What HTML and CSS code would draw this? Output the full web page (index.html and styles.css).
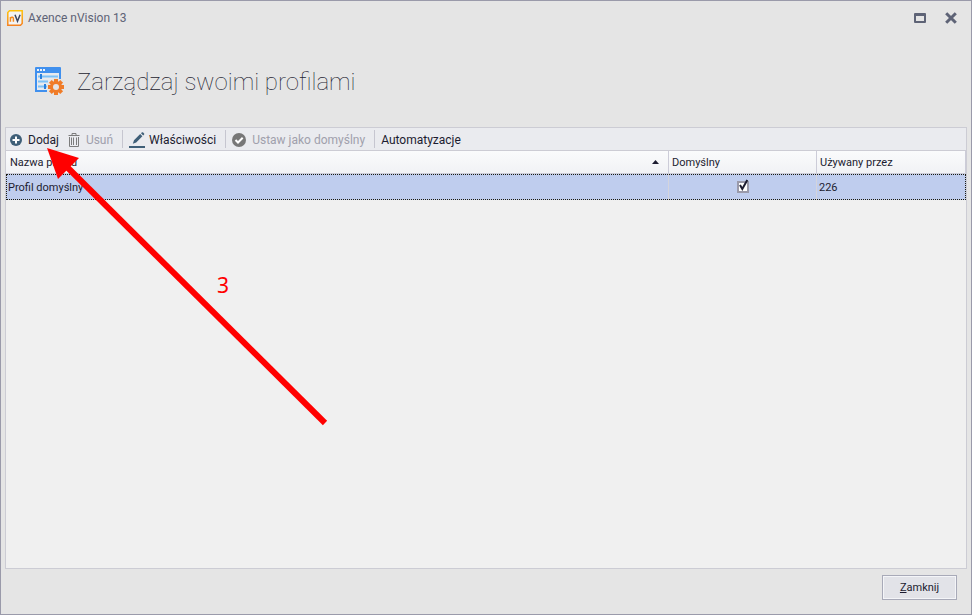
FILE: index.html
```html
<!DOCTYPE html>
<html lang="pl">
<head>
    <meta charset="UTF-8">
    <meta name="viewport" content="width=device-width, initial-scale=1.0">
    <title>Axence nVision 13</title>
    <link rel="stylesheet" href="styles.css">
</head>
<body>

    <div class="window">
        <!-- Title bar -->
        <div class="titlebar">
            <svg class="app-icon" width="16" height="16" viewBox="0 0 16 16">
                <defs>
                    <linearGradient id="logoEdge" x1="0" y1="0" x2="0" y2="1">
                        <stop offset="0" stop-color="#ffc20a"/>
                        <stop offset="1" stop-color="#f58220"/>
                    </linearGradient>
                </defs>
                <path d="M2.5 .8H15.2V13.5L13.5 15.2H.8V2.5Z" fill="#f4f4f4" stroke="url(#logoEdge)" stroke-width="1.5"/>
                <path d="M3.4 11.8V7M3.4 8.2Q4.3 6.9 5.6 7.2Q6.4 7.4 6.4 8.8V11.8" fill="none" stroke="#f58a1f" stroke-width="1.5"/>
                <path d="M8 4.8L10.5 11.2L13.1 4.8" fill="none" stroke="#3c4560" stroke-width="1.5"/>
            </svg>
            <span class="window-title">Axence nVision 13</span>
            <button class="window-button" aria-label="Maksymalizuj">
                <svg width="12" height="10" viewBox="0 0 12 10">
                    <path d="M0 1Q0 0 1 0H11Q12 0 12 1V9Q12 10 11 10H1Q0 10 0 9ZM2 3V8H10V3Z" fill="#5e6376" fill-rule="evenodd"/>
                </svg>
            </button>
            <button class="window-button" aria-label="Zamknij okno">
                <svg width="12" height="12" viewBox="0 0 12 12">
                    <path d="M1.2 1.2L10.8 10.8M10.8 1.2L1.2 10.8" stroke="#5e6376" stroke-width="3"/>
                </svg>
            </button>
        </div>

        <!-- Page heading -->
        <div class="header">
            <svg class="header-icon" width="30" height="30" viewBox="0 0 30 30">
                <path d="M0 1Q0 0 1 0H25Q26 0 26 1V25H0Z" fill="#4090ee"/>
                <path d="M2 6H24V23H2Z" fill="#e8eaee"/>
                <path d="M2 2H4V4H2ZM5 2H7V4H5ZM8 2H10V4H8Z" fill="#eef3fa"/>
                <path d="M12 26V17L16 12L24 10L27 12V26Z" fill="#e5e5e5"/>
                <path d="M24 6H26V12H24Z" fill="#4090ee"/>
                <path d="M3 8.5H23V10.5H3ZM3 13.5H13V15.5H3ZM3 18.5H12V20.5H3Z" fill="#7cc2f8"/>
                <path d="M5 7H7V12H5ZM9 17H11V22H9Z" fill="#2a7fdc"/>
                <g fill="#f07c28">
                    <path d="M19 12H23V28H19Z"/>
                    <path d="M19 12H23V28H19Z" transform="rotate(45 21 20)"/>
                    <path d="M19 12H23V28H19Z" transform="rotate(90 21 20)"/>
                    <path d="M19 12H23V28H19Z" transform="rotate(135 21 20)"/>
                    <circle cx="21" cy="20" r="6"/>
                </g>
                <circle cx="21" cy="20" r="3" fill="#e5e5e5"/>
            </svg>
            <h1>Zarządzaj swoimi profilami</h1>
        </div>

        <!-- Profile list -->
        <div class="panel">
            <div class="toolbar">
                <button class="tool">
                    <svg width="12" height="12" viewBox="0 0 12 12">
                        <circle cx="6" cy="6" r="6" fill="#3f5f78"/>
                        <path d="M6 2.5V9.5M2.5 6H9.5" stroke="#fff" stroke-width="2"/>
                    </svg>
                    Dodaj
                </button>
                <button class="tool" disabled>
                    <svg width="12" height="14" viewBox="0 0 12 14">
                        <path d="M4 2V.5H8V2M.5 2.5H11.5M1.5 4V13.5H10.5V4M3.5 4.5V12M5.5 4.5V12M8.5 4.5V12" fill="none" stroke="#7c7c7c"/>
                    </svg>
                    Usuń
                </button>
                <span class="separator"></span>
                <button class="tool tool-edit">
                    <svg width="16" height="16" viewBox="0 0 16 16">
                        <path d="M0 14H16V16H0Z" fill="#3f5f78"/>
                        <path d="M5 8.3L11.2 2.1L13.4 4.3L7.2 10.5L3.8 11.8ZM12 1.3L13 .3Q13.6 0 14.2 .5L15.1 1.4Q15.6 2 15.1 2.6L14.2 3.5Z" fill="#3f5f78"/>
                    </svg>
                    Właściwości
                </button>
                <span class="separator"></span>
                <button class="tool" disabled>
                    <svg width="14" height="14" viewBox="0 0 14 14">
                        <circle cx="7" cy="7" r="7" fill="#777"/>
                        <path d="M3.5 7L6 9.5L10.7 4.8" fill="none" stroke="#fff" stroke-width="2"/>
                    </svg>
                    Ustaw jako domyślny
                </button>
                <span class="separator"></span>
                <button class="tool">Automatyzacje</button>
            </div>

            <table class="profiles">
                <thead>
                    <tr>
                        <th class="col-name">
                            <div class="sorted">
                                <span>Nazwa profilu</span>
                                <svg width="7" height="4" viewBox="0 0 7 4"><path d="M0 4L3.5 0L7 4Z" fill="#1c1c30"/></svg>
                            </div>
                        </th>
                        <th class="col-default">Domyślny</th>
                        <th class="col-used">Używany przez</th>
                    </tr>
                </thead>
                <tbody>
                    <tr class="selected">
                        <td>Profil domyślny</td>
                        <td class="check-cell">
                            <label class="check">
                                <input type="checkbox" aria-label="Domyślny" checked>
                                <svg class="tick" width="12" height="14" viewBox="0 0 12 14">
                                    <path d="M3 6L5.3 10L10.3 1" fill="none" stroke="#1c1c30" stroke-width="2"/>
                                </svg>
                            </label>
                        </td>
                        <td>226</td>
                    </tr>
                </tbody>
            </table>
        </div>

        <div class="footer">
            <button class="button"><u>Z</u>amknij</button>
        </div>

        <!-- Step marker drawn over the list -->
        <svg class="arrow" width="290" height="290" viewBox="0 0 290 290">
            <path d="M283 281L20 20" stroke="#f00" stroke-width="6"/>
            <path d="M5 6L37 16L16 37Z" fill="#f00"/>
        </svg>
        <span class="step">3</span>
    </div>

</body>
</html>
```
FILE: styles.css
```css
* {
    box-sizing: border-box;
}
body {
    margin: 0;
    font-family: Roboto, "Liberation Sans", sans-serif;
    font-size: 11px;
    color: #1c1c30;
}
button {
    font-family: inherit;
    color: inherit;
}
.window {
    position: relative;
    display: flex;
    flex-direction: column;
    min-height: 100vh;
    padding: 0 4px;
    border: 1px solid #9a9aaa;
    background-color: #e5e5e5;
}
.titlebar {
    display: flex;
    align-items: center;
    height: 34px;
    padding: 0 1px 0 2px;
}
.window-title {
    flex: 1;
    margin-left: 5px;
    font-size: 12px;
    color: #5e6376;
}
.window-button {
    display: flex;
    align-items: center;
    justify-content: center;
    width: 31px;
    height: 24px;
    padding: 0;
    border: none;
    background: none;
}
.header {
    display: flex;
    align-items: center;
    gap: 12px;
    height: 92px;
    padding: 2px 30px 0;
}
h1 {
    margin: 0;
    font-size: 24px;
    font-weight: 100;
    line-height: 32px;
}
.panel {
    flex: 1;
    border: 1px solid #ccccd4;
    background-color: #f0f0f0;
}
.toolbar {
    display: flex;
    align-items: center;
    height: 23px;
    padding: 0 4px;
    border-bottom: 1px solid #ccccd4;
    background-color: #eaebef;
}
.tool {
    display: flex;
    align-items: center;
    gap: 6px;
    height: 22px;
    margin-right: 9px;
    padding: 1px 0 0;
    border: none;
    background: none;
    font-size: 12px;
    white-space: nowrap;
}
.tool:disabled {
    color: #a0a0ac;
}
.tool-edit {
    gap: 4px;
}
.separator {
    width: 1px;
    height: 18px;
    margin-right: 6px;
    background-color: #c6c6d0;
}
.profiles {
    width: 100%;
    border-collapse: separate;
    border-spacing: 0;
    table-layout: fixed;
}
.profiles th {
    height: 23px;
    padding: 0 3px;
    border-right: 1px solid #ccccd8;
    border-bottom: 1px solid #ccccd8;
    background: linear-gradient(#fafbfc, #f1f2f5);
    font-weight: normal;
    text-align: left;
}
.profiles .col-name {
    padding: 0 9px 0 4px;
}
.col-default {
    width: 148px;
}
.col-used {
    width: 149px;
}
.sorted {
    display: flex;
    align-items: center;
    justify-content: space-between;
}
.profiles td {
    height: 26px;
    padding: 0 2px;
    border-right: 1px solid #d4d4dc;
}
.profiles td:last-child {
    border-right: none;
}
.selected {
    background-color: #bfcdee;
    outline: 1px dotted #1c1c10;
    outline-offset: -1px;
}
.profiles .check-cell {
    padding-bottom: 2px;
    text-align: center;
}
.check {
    position: relative;
    display: inline-flex;
    vertical-align: middle;
}
.check input {
    appearance: none;
    width: 12px;
    height: 12px;
    margin: 0;
    border: 2px solid #9a9aaa;
    background-color: #fff;
}
.tick {
    position: absolute;
    left: 0;
    bottom: 0;
}
.footer {
    display: flex;
    align-items: center;
    justify-content: flex-end;
    height: 45px;
    padding: 0 10px 8px;
}
.button {
    width: 75px;
    height: 25px;
    padding: 0;
    border: 1px solid #a8aab8;
    background-color: #e2e3e8;
    box-shadow: inset 0 0 0 1px #f4f5f8;
    font-size: 11px;
}
.arrow {
    position: absolute;
    top: 141px;
    left: 41px;
    pointer-events: none;
}
.step {
    position: absolute;
    top: 270px;
    left: 216px;
    font-family: "Noto Sans", sans-serif;
    font-size: 21px;
    line-height: 28px;
    color: #f00;
}
```
